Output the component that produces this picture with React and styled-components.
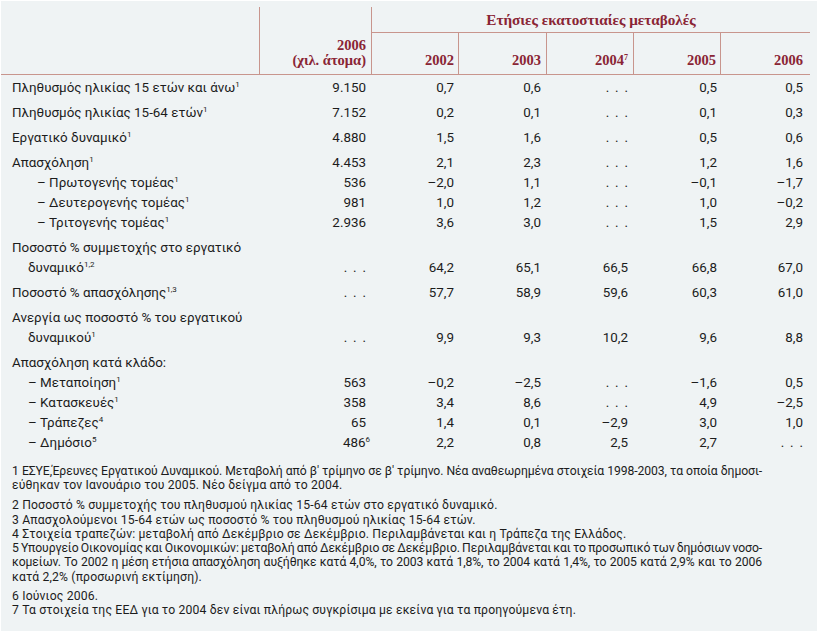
import React from 'react';
import styled, { createGlobalStyle } from 'styled-components';

const GlobalStyle = createGlobalStyle`
  html, body { margin: 0; padding: 0; background: #ffffff; }
  body { font-family: Roboto, "Noto Sans", sans-serif; }
  * { box-sizing: border-box; }
`;

const COLS = '259px 112px 87px 88px 87px 87px 89px';
const LINE = '#c8958d';
const HEAD = '#8a2535';
const PADS = [6, 5, 6, 6, 4, 7];

const Page = styled.div`
  width: 816px;
  height: 630px;
  margin: 1px 0 0 1px;
  padding-top: 6px;
  background: #eff3f4;
  color: #1c1c1c;
  overflow: hidden;
`;

const HeadGrid = styled.div`
  display: grid;
  grid-template-columns: ${COLS};
  grid-template-rows: 26px 41px;
  width: 809px;
  border-bottom: 1px solid ${LINE};
  font-family: "Liberation Serif", "DejaVu Serif", serif;
  font-weight: bold;
  color: ${HEAD};
`;

const HeadBlank = styled.div`
  grid-row: 1 / 3;
  border-right: 1px solid ${LINE};
`;

const UnitCell = styled.div`
  grid-row: 1 / 3;
  border-right: 1px solid ${LINE};
  display: flex;
  flex-direction: column;
  justify-content: flex-end;
  align-items: flex-end;
  padding: 0 5px 6px 0;
  font-size: 14.5px;
  line-height: 15px;
`;

const Title = styled.div`
  grid-column: 3 / 8;
  border-bottom: 1px solid ${LINE};
  text-align: center;
  font-size: 15.2px;
  line-height: 26px;
`;

const YearCell = styled.div`
  border-right: ${p => (p.$last ? 'none' : `1px solid ${LINE}`)};
  display: flex;
  align-items: flex-end;
  justify-content: flex-end;
  padding: 0 ${p => p.$pr}px 6px 0;
  font-size: 14.5px;
  line-height: 15px;
`;

const Body = styled.div`
  width: 809px;
  font-size: 13.4px;
`;

const Row = styled.div`
  display: grid;
  grid-template-columns: ${COLS};
  align-items: end;
  padding-top: ${p => p.$gap}px;
  line-height: 20px;
`;

const Label = styled.div`
  padding-left: ${p => p.$indent}px;
  text-indent: ${p => p.$hang}px;
  white-space: nowrap;
`;

const Val = styled.div`
  text-align: right;
  padding-right: ${p => p.$pr}px;
  white-space: nowrap;
`;

const Sup = styled.span`
  font-size: 8px;
  vertical-align: 5px;
  line-height: 0;
  margin-right: ${p => (p.$hang ? '-4px' : '0')};
`;

const Dots = styled.span`
  word-spacing: 2.5px;
`;

const Notes = styled.div`
  width: 761px;
  padding: 11px 0 0 11px;
  font-size: 12.2px;
  line-height: 14.3px;
`;

const Note = styled.div`
  margin-bottom: ${p => p.$after || 0}px;
`;

const NoteLine = styled.div`
  text-align: ${p => (p.$justify ? 'justify' : 'left')};
  text-align-last: ${p => (p.$justify ? 'justify' : 'left')};
  letter-spacing: ${p => (p.$justify ? '-0.1px' : '0.15px')};
  word-spacing: ${p => (p.$justify ? '-1.5px' : '0')};
  white-space: nowrap;
`;

const years = [
  { y: '2002' },
  { y: '2003' },
  { y: '2004', sup: '7' },
  { y: '2005' },
  { y: '2006' },
];

const D = '...';

const rows = [
  { l: ['Πληθυσμός ηλικίας 15 ετών και άνω'], s: '1', v: ['9.150', '0,7', '0,6', D, '0,5', '0,5'], gap: 3 },
  { l: ['Πληθυσμός ηλικίας 15-64 ετών'], s: '1', v: ['7.152', '0,2', '0,1', D, '0,1', '0,3'], gap: 5 },
  { l: ['Εργατικό δυναμικό'], s: '1', v: ['4.880', '1,5', '1,6', D, '0,5', '0,6'], gap: 5 },
  { l: ['Απασχόληση'], s: '1', v: ['4.453', '2,1', '2,3', D, '1,2', '1,6'], gap: 5 },
  { l: ['– Πρωτογενής τομέας'], s: '1', v: ['536', '–2,0', '1,1', D, '–0,1', '–1,7'], gap: 0, ind: 36 },
  { l: ['– Δευτερογενής τομέας'], s: '1', v: ['981', '1,0', '1,2', D, '1,0', '–0,2'], gap: 0, ind: 36 },
  { l: ['– Τριτογενής τομέας'], s: '1', v: ['2.936', '3,6', '3,0', D, '1,5', '2,9'], gap: 0, ind: 36 },
  { l: ['Ποσοστό % συμμετοχής στο εργατικό', 'δυναμικό'], s: '1,2', v: [D, '64,2', '65,1', '66,5', '66,8', '67,0'], gap: 5 },
  { l: ['Ποσοστό % απασχόλησης'], s: '1,3', v: [D, '57,7', '58,9', '59,6', '60,3', '61,0'], gap: 5 },
  { l: ['Ανεργία ως ποσοστό % του εργατικού', 'δυναμικού'], s: '1', v: [D, '9,9', '9,3', '10,2', '9,6', '8,8'], gap: 5 },
  { l: ['Απασχόληση κατά κλάδο:'], s: '', v: ['', '', '', '', '', ''], gap: 5 },
  { l: ['– Μεταποίηση'], s: '1', v: ['563', '–0,2', '–2,5', D, '–1,6', '0,5'], gap: 0, ind: 27 },
  { l: ['– Κατασκευές'], s: '1', v: ['358', '3,4', '8,6', D, '4,9', '–2,5'], gap: 0, ind: 27 },
  { l: ['– Τράπεζες'], s: '4', v: ['65', '1,4', '0,1', '–2,9', '3,0', '1,0'], gap: 0, ind: 27 },
  { l: ['– Δημόσιο'], s: '5', v: ['486', '2,2', '0,8', '2,5', '2,7', D], gap: 0, ind: 27, v0sup: '6' },
];

const notes = [
  {
    lines: [
      '1 ΕΣΥΕ,Έρευνες Εργατικού Δυναμικού. Μεταβολή από β′ τρίμηνο σε β′ τρίμηνο. Νέα αναθεωρημένα στοιχεία 1998-2003, τα οποία δημοσι-',
      'εύθηκαν τον Ιανουάριο του 2005. Νέο δείγμα από το 2004.',
    ],
    after: 5.7,
  },
  { lines: ['2 Ποσοστό % συμμετοχής του πληθυσμού ηλικίας 15-64 ετών στο εργατικό δυναμικό.'] },
  { lines: ['3 Απασχολούμενοι 15-64 ετών ως ποσοστό % του πληθυσμού ηλικίας 15-64 ετών.'] },
  { lines: ['4 Στοιχεία τραπεζών: μεταβολή από Δεκέμβριο σε Δεκέμβριο. Περιλαμβάνεται και η Τράπεζα της Ελλάδος.'] },
  {
    lines: [
      '5 Υπουργείο Οικονομίας και Οικονομικών: μεταβολή από Δεκέμβριο σε Δεκέμβριο. Περιλαμβάνεται και το προσωπικό των δημόσιων νοσο-',
      'κομείων. Το 2002 η μέση ετήσια απασχόληση αυξήθηκε κατά 4,0%, το 2003 κατά 1,8%, το 2004 κατά 1,4%, το 2005 κατά 2,9% και το 2006',
      'κατά 2,2% (προσωρινή εκτίμηση).',
    ],
    after: 5,
  },
  { lines: ['6 Ιούνιος 2006.'] },
  { lines: ['7 Τα στοιχεία της ΕΕΔ για το 2004 δεν είναι πλήρως συγκρίσιμα με εκείνα για τα προηγούμενα έτη.'] },
];

const Cell = ({ value, pr, sup }) => (
  <Val $pr={pr}>
    {value === D ? <Dots>. . .</Dots> : value}
    {sup ? <Sup $hang>{sup}</Sup> : null}
  </Val>
);

export default function App() {
  return (
    <>
      <GlobalStyle />
      <Page>
        <HeadGrid>
          <HeadBlank />
          <UnitCell>
            <span>2006</span>
            <span>(χιλ. άτομα)</span>
          </UnitCell>
          <Title>Ετήσιες εκατοστιαίες μεταβολές</Title>
          {years.map((y, i) => (
            <YearCell key={y.y} $pr={[4, 5, 5, 4, 7][i]} $last={i === years.length - 1}>
              <span>
                {y.y}
                {y.sup ? <Sup>{y.sup}</Sup> : null}
              </span>
            </YearCell>
          ))}
        </HeadGrid>
        <Body>
          {rows.map((r, i) => {
            const multi = r.l.length > 1;
            return (
              <Row key={i} $gap={r.gap}>
                <Label $indent={multi ? 27 : r.ind || 11} $hang={multi ? -16 : 0}>
                  {r.l.map((t, j) => (
                    <React.Fragment key={j}>
                      {j > 0 ? <br /> : null}
                      {t}
                    </React.Fragment>
                  ))}
                  {r.s ? <Sup>{r.s}</Sup> : null}
                </Label>
                {r.v.map((v, j) => (
                  <Cell key={j} value={v} pr={PADS[j]} sup={j === 0 ? r.v0sup : null} />
                ))}
              </Row>
            );
          })}
        </Body>
        <Notes>
          {notes.map((n, i) => (
            <Note key={i} $after={n.after}>
              {n.lines.map((t, j) => (
                <NoteLine key={j} $justify={j < n.lines.length - 1}>
                  {t}
                </NoteLine>
              ))}
            </Note>
          ))}
        </Notes>
      </Page>
    </>
  );
}
